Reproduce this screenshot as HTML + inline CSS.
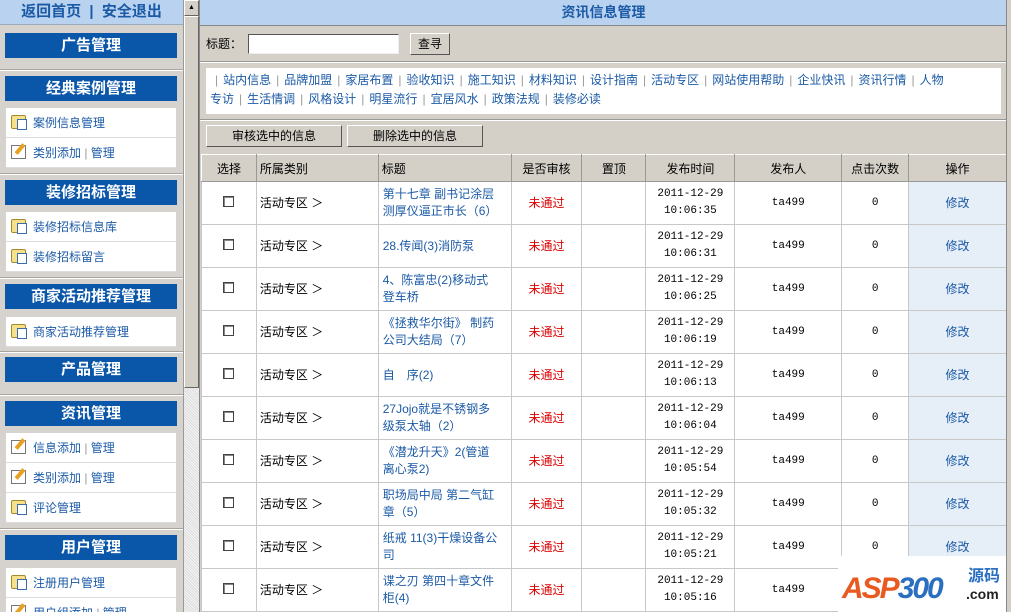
<!DOCTYPE html>
<html><head><meta charset="utf-8"><style>
*{margin:0;padding:0;box-sizing:border-box}
html{width:1011px;height:612px;overflow:hidden}
body{width:1011px;height:612px;overflow:hidden;background:#d4d0c8;font-family:"Liberation Sans","SimSun","Noto Sans CJK SC",sans-serif;font-size:12px;position:relative}
.abs{position:absolute}
#left{left:0;top:0;width:183px;height:612px;background:#d6d3ce;overflow:hidden}
#topl{left:0;top:0;width:183px;height:25px;background:#b9d2ef;color:#1b5aa6;font-weight:bold;font-size:15px;text-align:center;line-height:24px;border-bottom:1px solid #9ab}
.hd{position:absolute;left:5px;width:172px;height:25px;background:#0a56a8;color:#fff;font-weight:bold;font-size:15px;text-align:center;line-height:25px}
.it{position:absolute;left:6px;width:170px;height:30px;background:#fff;border-bottom:1px solid #ddd;color:#1b5aa6;font-size:12px;line-height:30px;padding-left:27px}
.sep{position:absolute;left:0;width:183px;height:2px;border-top:1px solid #a8a59f;border-bottom:1px solid #fff}
.ic{position:absolute;left:5px;top:7px;width:15px;height:14px}
.ic.f{background:#f7e08a;border:1px solid #a08a30;border-radius:2px}
.ic.f:after{content:"";position:absolute;left:5px;top:3px;width:8px;height:9px;background:#fff;border:1px solid #3a6db0}
.ic.p{background:#fff;border:1px solid #777}
.ic.p:after{content:"";position:absolute;left:6px;top:-3px;width:4px;height:12px;background:#e8a020;transform:rotate(40deg)}
#sb{left:183px;top:0;width:16px;height:612px;background:#e4e2de;background-image:repeating-linear-gradient(45deg,#ddd 0 1px,#f4f4f4 1px 2px);border-left:1px solid #999}
#thumb{left:184px;top:16px;width:15px;height:372px;background:#d4d0c8;border:1px solid;border-color:#fff #666 #666 #fff}
#up{left:184px;top:0;width:15px;height:16px;background:#d4d0c8;border:1px solid;border-color:#fff #666 #666 #fff;font-size:7px;text-align:center;line-height:14px}
#main{left:199px;top:0;width:808px;height:612px;background:#d4d0c8;border-left:1px solid #888;overflow:hidden}
#title{left:0;top:0;width:807px;height:26px;background:#b9d2ef;color:#1b5aa6;font-weight:bold;font-size:14px;text-align:center;line-height:25px;border-bottom:1px solid #888}
#srch{left:6px;top:34px;font-size:12px;line-height:20px}
#srch input{position:absolute;left:42px;top:0;width:151px;height:20px;border:1px solid;border-color:#555 #eee #eee #555;background:#fff}
.btn{position:absolute;background:#d4d0c8;border:1px solid;border-color:#fff #555 #555 #fff;text-align:center;font-size:12px;line-height:20px}
#line1{left:0;top:61px;width:807px;border-top:1px solid #999;border-bottom:1px solid #fff}
#cats{left:6px;top:68px;width:795px;height:46px;background:#fff;color:#1b5aa6;padding:3px 4px;line-height:19px;font-size:12px}
#cats i{color:#999;font-style:normal;margin:0 5px}
#line2{left:0;top:119px;width:807px;border-top:1px solid #999;border-bottom:1px solid #fff}
table{position:absolute;left:1px;top:154px;border-collapse:collapse;table-layout:fixed}
td,th{border:1px solid #c8c8c8;text-align:center;font-weight:normal;font-size:12px}
th{background:#d4d0c8;height:27px;border-color:#fff #999 #999 #fff;border-style:solid}
td{background:#fff;height:43px;line-height:17px}
td.l{text-align:left;padding-left:4px;padding-right:12px;color:#1b5aa6}
td.c{text-align:left;padding-left:3px}
td.r{color:#d00}
td.e{background:#e6eef7;color:#1b5aa6}
td.m{font-family:"Liberation Mono",monospace;font-size:11px}
.cb{display:inline-block;width:11px;height:11px;border:1px solid #444;background:#fff;box-shadow:inset 1px 1px #888}
#logo{left:838px;top:556px;width:168px;height:56px;background:#fff;white-space:nowrap}
</style></head><body>
<div id="left" class="abs">
<div id="topl" class="abs">返回首页 &nbsp;| &nbsp;安全退出</div>
<div class="hd" style="top:33px">广告管理</div>
<div class="sep" style="top:69px"></div>
<div class="hd" style="top:76px">经典案例管理</div>
<div class="it" style="top:108px"><span class="ic f"></span>案例信息管理</div>
<div class="it" style="top:138px"><span class="ic p"></span>类别添加 <span style="color:#999">|</span> 管理</div>
<div class="sep" style="top:173px"></div>
<div class="hd" style="top:180px">装修招标管理</div>
<div class="it" style="top:212px"><span class="ic f"></span>装修招标信息库</div>
<div class="it" style="top:242px"><span class="ic f"></span>装修招标留言</div>
<div class="sep" style="top:277px"></div>
<div class="hd" style="top:284px">商家活动推荐管理</div>
<div class="it" style="top:317px"><span class="ic f"></span>商家活动推荐管理</div>
<div class="sep" style="top:351px"></div>
<div class="hd" style="top:357px">产品管理</div>
<div class="sep" style="top:394px"></div>
<div class="hd" style="top:401px">资讯管理</div>
<div class="it" style="top:433px"><span class="ic p"></span>信息添加 <span style="color:#999">|</span> 管理</div>
<div class="it" style="top:463px"><span class="ic p"></span>类别添加 <span style="color:#999">|</span> 管理</div>
<div class="it" style="top:493px"><span class="ic f"></span>评论管理</div>
<div class="sep" style="top:528px"></div>
<div class="hd" style="top:535px">用户管理</div>
<div class="it" style="top:568px"><span class="ic f"></span>注册用户管理</div>
<div class="it" style="top:598px"><span class="ic p"></span>用户组添加 <span style="color:#999">|</span> 管理</div>
</div>
<div id="sb" class="abs"></div>
<div id="up" class="abs">▲</div>
<div id="thumb" class="abs"></div>
<div id="main" class="abs">
<div id="title" class="abs">资讯信息管理</div>
<div id="srch" class="abs">标题：<input><div class="btn" style="left:204px;top:-1px;width:40px;height:22px">查寻</div></div>
<div id="line1" class="abs"></div>
<div id="cats" class="abs"><i>|</i>站内信息<i>|</i>品牌加盟<i>|</i>家居布置<i>|</i>验收知识<i>|</i>施工知识<i>|</i>材料知识<i>|</i>设计指南<i>|</i>活动专区<i>|</i>网站使用帮助<i>|</i>企业快讯<i>|</i>资讯行情<i>|</i>人物<br>专访<i>|</i>生活情调<i>|</i>风格设计<i>|</i>明星流行<i>|</i>宜居风水<i>|</i>政策法规<i>|</i>装修必读</div>
<div id="line2" class="abs"></div>
<div class="btn" style="left:6px;top:125px;width:136px;height:22px">审核选中的信息</div>
<div class="btn" style="left:147px;top:125px;width:136px;height:22px">删除选中的信息</div>
<table>
<colgroup><col style="width:55px"><col style="width:122px"><col style="width:133px"><col style="width:71px"><col style="width:64px"><col style="width:89px"><col style="width:107px"><col style="width:67px"><col style="width:98px"></colgroup>
<tr><th>选择</th><th style="text-align:left;padding-left:3px">所属类别</th><th style="text-align:left;padding-left:3px">标题</th><th>是否审核</th><th>置顶</th><th>发布时间</th><th>发布人</th><th>点击次数</th><th>操作</th></tr>
<tr><td><span class="cb"></span></td><td class="c">活动专区 ＞</td><td class="l">第十七章 副书记涂层测厚仪逼正市长（6）</td><td class="r">未通过</td><td></td><td class="m">2011-12-29<br>10:06:35</td><td class="m">ta499</td><td class="m">0</td><td class="e">修改</td></tr>
<tr><td><span class="cb"></span></td><td class="c">活动专区 ＞</td><td class="l">28.传闻(3)消防泵</td><td class="r">未通过</td><td></td><td class="m">2011-12-29<br>10:06:31</td><td class="m">ta499</td><td class="m">0</td><td class="e">修改</td></tr>
<tr><td><span class="cb"></span></td><td class="c">活动专区 ＞</td><td class="l">4、陈富忠(2)移动式登车桥</td><td class="r">未通过</td><td></td><td class="m">2011-12-29<br>10:06:25</td><td class="m">ta499</td><td class="m">0</td><td class="e">修改</td></tr>
<tr><td><span class="cb"></span></td><td class="c">活动专区 ＞</td><td class="l">《拯救华尔街》 制药公司大结局（7）</td><td class="r">未通过</td><td></td><td class="m">2011-12-29<br>10:06:19</td><td class="m">ta499</td><td class="m">0</td><td class="e">修改</td></tr>
<tr><td><span class="cb"></span></td><td class="c">活动专区 ＞</td><td class="l">自　序(2)</td><td class="r">未通过</td><td></td><td class="m">2011-12-29<br>10:06:13</td><td class="m">ta499</td><td class="m">0</td><td class="e">修改</td></tr>
<tr><td><span class="cb"></span></td><td class="c">活动专区 ＞</td><td class="l">27Jojo就是不锈钢多级泵太轴（2）</td><td class="r">未通过</td><td></td><td class="m">2011-12-29<br>10:06:04</td><td class="m">ta499</td><td class="m">0</td><td class="e">修改</td></tr>
<tr><td><span class="cb"></span></td><td class="c">活动专区 ＞</td><td class="l">《潜龙升天》2(管道离心泵2)</td><td class="r">未通过</td><td></td><td class="m">2011-12-29<br>10:05:54</td><td class="m">ta499</td><td class="m">0</td><td class="e">修改</td></tr>
<tr><td><span class="cb"></span></td><td class="c">活动专区 ＞</td><td class="l">职场局中局 第二气缸章（5）</td><td class="r">未通过</td><td></td><td class="m">2011-12-29<br>10:05:32</td><td class="m">ta499</td><td class="m">0</td><td class="e">修改</td></tr>
<tr><td><span class="cb"></span></td><td class="c">活动专区 ＞</td><td class="l">纸戒 11(3)干燥设备公司</td><td class="r">未通过</td><td></td><td class="m">2011-12-29<br>10:05:21</td><td class="m">ta499</td><td class="m">0</td><td class="e">修改</td></tr>
<tr><td><span class="cb"></span></td><td class="c">活动专区 ＞</td><td class="l">谍之刃 第四十章文件柜(4)</td><td class="r">未通过</td><td></td><td class="m">2011-12-29<br>10:05:16</td><td class="m">ta499</td><td class="m">0</td><td class="e">修改</td></tr>
</table>
</div>
<div class="abs" style="left:1006px;top:0;width:5px;height:612px;background:#d4d0c8;border-left:1px solid #888"></div>
<div id="logo" class="abs"><span style="position:absolute;left:4px;top:16px;font:italic bold 30px 'Liberation Sans',sans-serif;color:#e85a20;letter-spacing:-2px">ASP<span style="color:#2a6fc0">300</span></span><span style="position:absolute;left:130px;top:6px;font-weight:bold;font-size:16px;color:#2a6fc0">源码</span><span style="position:absolute;left:128px;top:30px;font-weight:bold;font-size:14px;color:#222">.com</span></div>
</body></html>
